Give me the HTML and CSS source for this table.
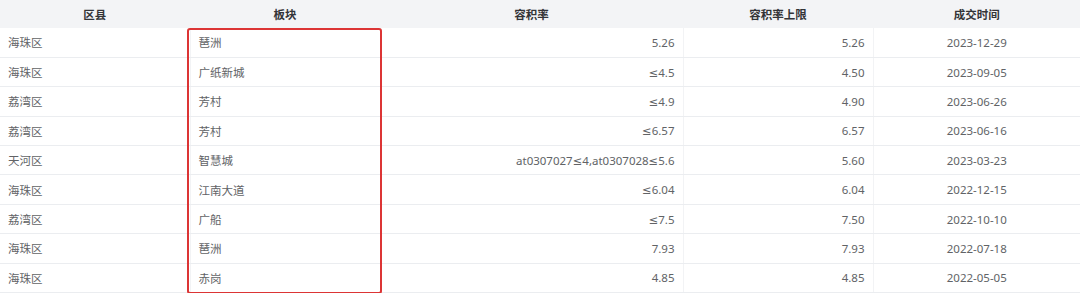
FILE: index.html
```html
<!DOCTYPE html>
<html lang="zh">
<head>
<meta charset="utf-8">
<link rel="stylesheet" href="styles.css">
</head>
<body>
<div class="wrap">
<table class="grid">
<colgroup>
<col class="c1"><col class="c2"><col class="c3"><col class="c4"><col class="c5">
</colgroup>
<thead>
<tr><th>区县</th><th>板块</th><th>容积率</th><th>容积率上限</th><th>成交时间</th></tr>
</thead>
<tbody>
<tr><td>海珠区</td><td>琶洲</td><td class="r">5.26</td><td class="r">5.26</td><td class="c">2023-12-29</td></tr>
<tr><td>海珠区</td><td>广纸新城</td><td class="r">≤4.5</td><td class="r">4.50</td><td class="c">2023-09-05</td></tr>
<tr><td>荔湾区</td><td>芳村</td><td class="r">≤4.9</td><td class="r">4.90</td><td class="c">2023-06-26</td></tr>
<tr><td>荔湾区</td><td>芳村</td><td class="r">≤6.57</td><td class="r">6.57</td><td class="c">2023-06-16</td></tr>
<tr><td>天河区</td><td>智慧城</td><td class="r">at0307027≤4,at0307028≤5.6</td><td class="r">5.60</td><td class="c">2023-03-23</td></tr>
<tr><td>海珠区</td><td>江南大道</td><td class="r">≤6.04</td><td class="r">6.04</td><td class="c">2022-12-15</td></tr>
<tr><td>荔湾区</td><td>广船</td><td class="r">≤7.5</td><td class="r">7.50</td><td class="c">2022-10-10</td></tr>
<tr><td>海珠区</td><td>琶洲</td><td class="r">7.93</td><td class="r">7.93</td><td class="c">2022-07-18</td></tr>
<tr><td>海珠区</td><td>赤岗</td><td class="r">4.85</td><td class="r">4.85</td><td class="c">2022-05-05</td></tr>
</tbody>
</table>
<div class="mark"></div>
</div>
</body>
</html>
```
FILE: styles.css
```css
html, body {
  margin: 0;
  padding: 0;
  background: #ffffff;
}
.wrap {
  position: relative;
  width: 1080px;
}
.grid {
  width: 1080px;
  table-layout: fixed;
  border-collapse: collapse;
  font-family: "Noto Sans", "DejaVu Sans", "Noto Sans CJK SC", sans-serif;
  font-size: 11.5px;
  color: #616366;
}
.c1 { width: 190px; }
.c2 { width: 190px; }
.c3 { width: 303px; }
.c4 { width: 190px; }
.c5 { width: 207px; }
.grid th {
  height: 28px;
  padding: 0 8px;
  background: #f3f4f6;
  color: #333438;
  font-weight: 600;
  text-align: center;
  border-right: 1px solid #f3f4f6;
}
.grid td {
  height: 29.4px;
  box-sizing: border-box;
  padding: 0 8px;
  border-bottom: 1px solid #ebedf0;
  border-right: 1px solid #f2f3f5;
  white-space: nowrap;
  text-align: left;
}
.grid td.r { text-align: right; }
.grid td.c { text-align: center; }
.grid td:last-child, .grid th:last-child { border-right: none; }
.mark {
  position: absolute;
  left: 187px;
  top: 28px;
  width: 195px;
  height: 266px;
  box-sizing: border-box;
  border: 2px solid #dc3535;
  border-radius: 3px;
}
```
